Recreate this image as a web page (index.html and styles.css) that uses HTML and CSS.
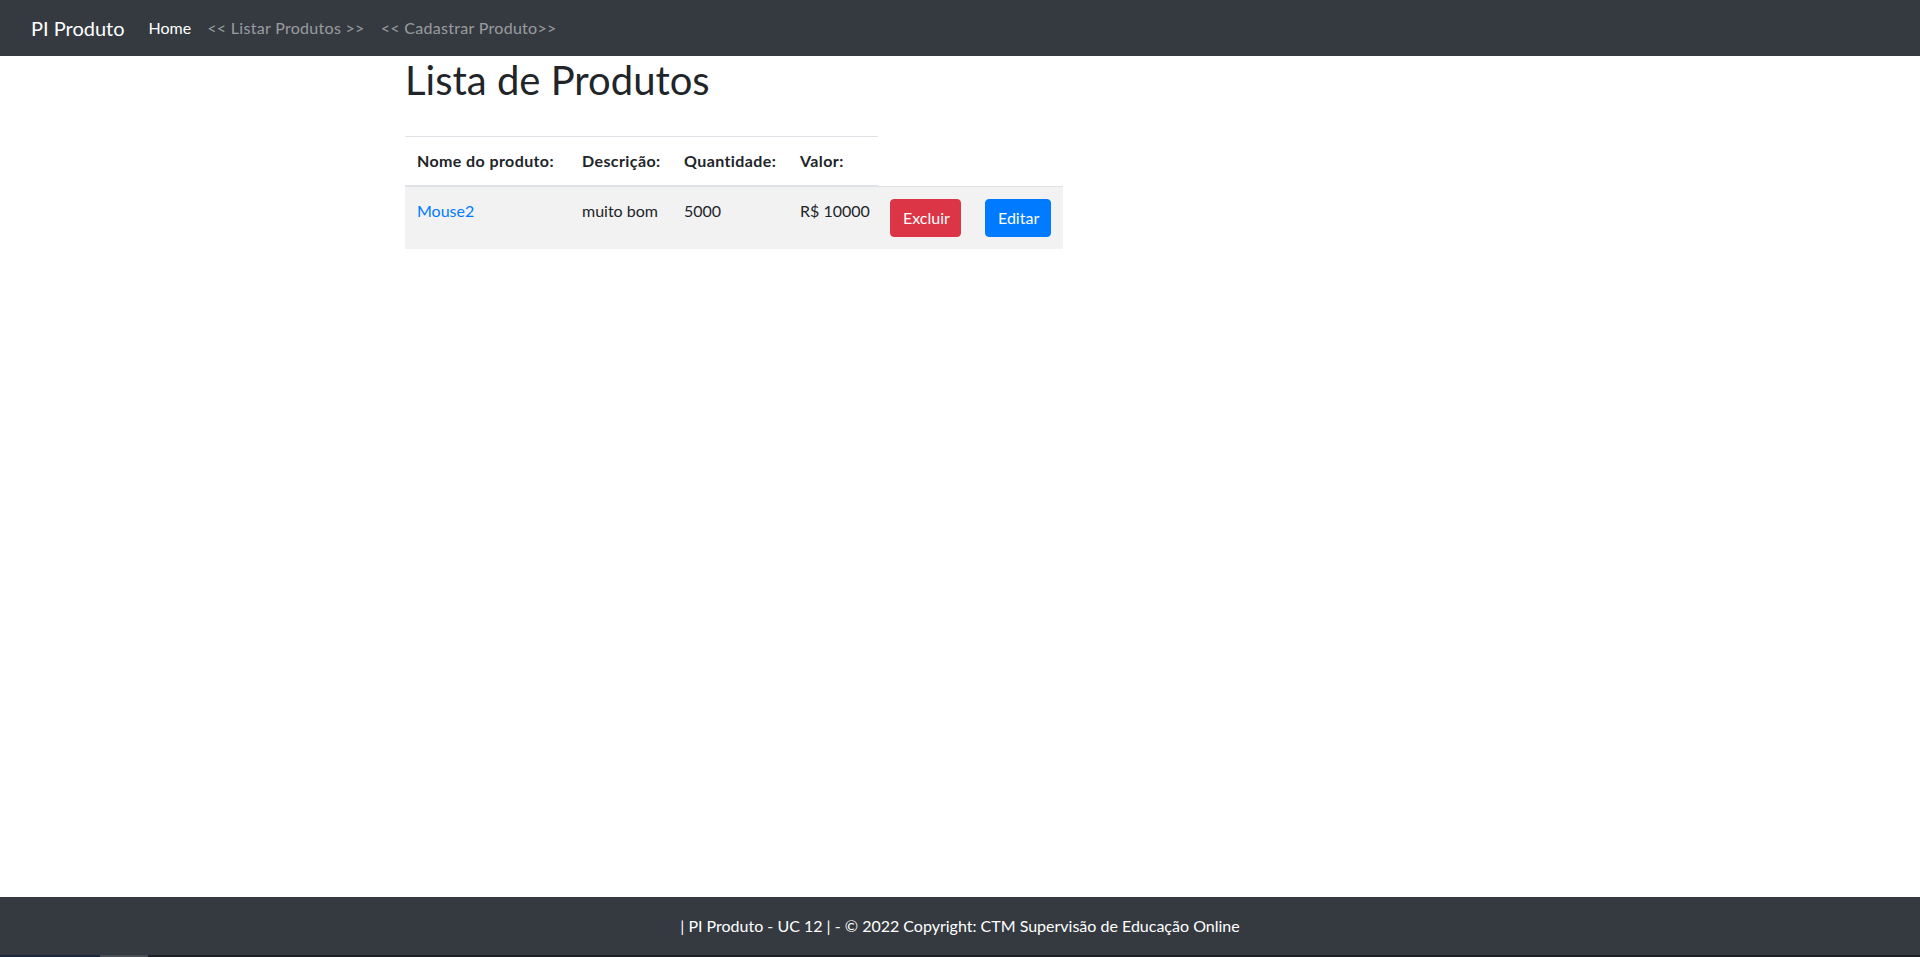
FILE: index.html
```html
<!DOCTYPE html>
<html lang="pt-br">
<head>
<meta charset="utf-8">
<title>Lista de Produtos</title>
<link rel="stylesheet" href="styles.css">
</head>
<body>
<nav class="navbar">
  <div class="navbar-inner">
    <a class="brand" href="#">PI Produto</a>
    <ul class="nav">
      <li><a class="nav-link active" href="#">Home</a></li>
      <li><a class="nav-link" href="#">&lt;&lt; Listar Produtos &gt;&gt;</a></li>
      <li><a class="nav-link" href="#">&lt;&lt; Cadastrar Produto&gt;&gt;</a></li>
    </ul>
  </div>
</nav>
<main class="main">
  <div class="container">
    <h1 class="title">Lista de Produtos</h1>
    <table class="table">
      <colgroup>
        <col class="c-nome">
        <col class="c-desc">
        <col class="c-qtd">
        <col class="c-valor">
        <col class="c-excluir">
        <col class="c-editar">
      </colgroup>
      <thead>
        <tr>
          <th>Nome do produto:</th>
          <th>Descrição:</th>
          <th>Quantidade:</th>
          <th>Valor:</th>
        </tr>
      </thead>
      <tbody>
        <tr>
          <td><a class="link" href="#">Mouse2</a></td>
          <td>muito bom</td>
          <td>5000</td>
          <td>R$ 10000</td>
          <td><button class="btn btn-danger">Excluir</button></td>
          <td><button class="btn btn-primary">Editar</button></td>
        </tr>
      </tbody>
    </table>
  </div>
</main>
<footer class="footer">
  <div class="footer-text">| PI Produto - UC 12 | - © 2022 Copyright: CTM Supervisão de Educação Online</div>
</footer>
<div class="strip">
  <span class="strip-a"></span>
  <span class="strip-b"></span>
  <span class="strip-c"></span>
</div>
</body>
</html>
```

FILE: styles.css
```css
* {
  box-sizing: border-box;
}

html, body {
  margin: 0;
  padding: 0;
}

body {
  font-family: Lato, "Liberation Sans", sans-serif;
  font-size: 16px;
  line-height: 24px;
  color: #212529;
  background: #fff;
  display: flex;
  flex-direction: column;
  min-height: 100vh;
}

a {
  text-decoration: none;
}

.navbar {
  background: #343a40;
  height: 56px;
  padding: 8px 16px;
}

.navbar-inner {
  display: flex;
  align-items: center;
  height: 40px;
  padding: 0 15px;
}

.brand {
  color: #fff;
  font-size: 20px;
  line-height: 30px;
  padding: 5px 0;
  margin-right: 16px;
}

.nav {
  display: flex;
  list-style: none;
  margin: 0;
  padding: 0;
}

.nav-link {
  display: block;
  padding: 8px;
  color: rgba(255, 255, 255, 0.5);
  font-size: 16px;
  line-height: 24px;
  letter-spacing: 0.3px;
}

.nav-link.active {
  color: #fff;
  letter-spacing: 0;
}

.main {
  flex: 1;
}

.container {
  width: 1140px;
  margin: 0 auto;
  padding: 0 15px;
}

.title {
  font-size: 40px;
  line-height: 48px;
  font-weight: 400;
  margin: 0 0 32px;
}

.table {
  border-collapse: collapse;
  table-layout: fixed;
  width: 658px;
  color: #212529;
}

.c-nome { width: 165px; }
.c-desc { width: 102px; }
.c-qtd { width: 116px; }
.c-valor { width: 90px; }
.c-excluir { width: 95px; }
.c-editar { width: 90px; }

.table th {
  text-align: left;
  font-weight: 700;
  padding: 12px;
  vertical-align: bottom;
  border-top: 1px solid #dee2e6;
  border-bottom: 2px solid #dee2e6;
  white-space: nowrap;
  letter-spacing: 0.4px;
}

.table td {
  padding: 12px;
  vertical-align: top;
  border-top: 1px solid #dee2e6;
  white-space: nowrap;
}

.table tbody tr:nth-of-type(odd) {
  background: rgba(0, 0, 0, 0.05);
}

.link {
  color: #007bff;
}

.btn {
  display: inline-block;
  font-family: inherit;
  font-size: 16px;
  line-height: 24px;
  padding: 6px 12px;
  border: 1px solid transparent;
  border-radius: 4px;
  color: #fff;
  cursor: pointer;
}

.btn-danger {
  background: #dc3545;
  border-color: #dc3545;
  width: 71px;
}

.btn-primary {
  background: #007bff;
  border-color: #007bff;
  width: 66px;
}

.footer {
  background: #343a40;
  color: #fff;
  text-align: center;
}

.footer-text {
  padding: 17px 16px;
}

.strip {
  display: flex;
  height: 2px;
}

.strip-a {
  width: 100px;
  background: #1d2740;
}

.strip-b {
  width: 48px;
  background: #4a4d55;
}

.strip-c {
  flex: 1;
  background: #1f2023;
}
```
